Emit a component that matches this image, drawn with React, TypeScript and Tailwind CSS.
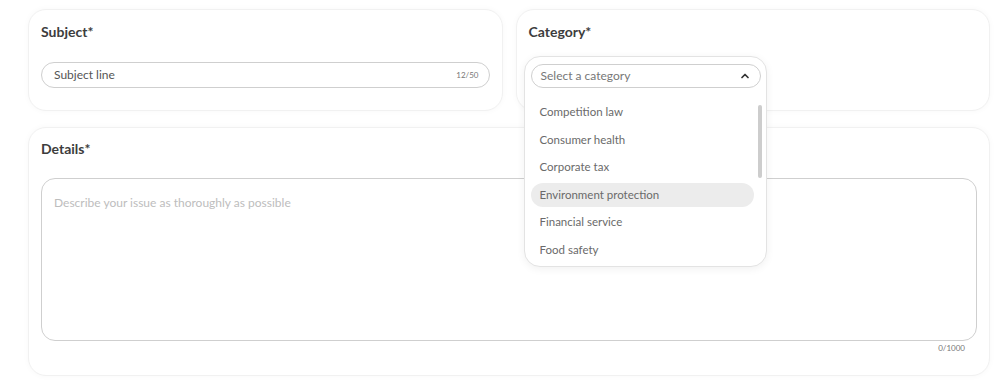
import { ChevronUp } from "lucide-react";

const CATEGORIES = [
  "Competition law",
  "Consumer health",
  "Corporate tax",
  "Environment protection",
  "Financial service",
  "Food safety",
];

function Card({ className, children }: { className?: string; children: React.ReactNode }) {
  return (
    <div
      className={`relative rounded-[18px] border border-[#f1f1f1] bg-white shadow-[0_0_6px_rgba(0,0,0,0.03)] px-[12px] ${className ?? ""}`}
    >
      {children}
    </div>
  );
}

function Label({ children }: { children: React.ReactNode }) {
  return <div className="text-[14px] font-bold leading-[18px] text-[#3d3d3d]">{children}</div>;
}

export default function App() {
  const active = "Environment protection";

  return (
    <div className="min-h-[392px] w-[1000px] bg-white font-['Lato',sans-serif]">
      <div className="ml-[28px] w-[962px] pt-[9px]">
        <div className="grid grid-cols-2 gap-[13px]">
          {/* Subject */}
          <Card className="h-[102px] pt-[13px]">
            <Label>Subject*</Label>
            <div className="mt-[21px] flex h-[26px] items-center justify-between rounded-full border border-[#cfcfcf] pl-[12px] pr-[10px]">
              <span className="text-[12px] text-[#555]">Subject line</span>
              <span className="text-[8px] text-[#777]">12/50</span>
            </div>
          </Card>

          {/* Category */}
          <Card className="z-10 h-[102px] pt-[13px]">
            <Label>Category*</Label>
            <div className="absolute left-[7px] top-[46px] h-[211px] w-[243px] overflow-hidden rounded-[16px] border border-[#e3e3e3] bg-white px-[6px] pt-[7px] shadow-[0_2px_8px_rgba(0,0,0,0.06)]">
              <div className="flex h-[24px] w-[230px] items-center justify-between rounded-full border border-[#cfcfcf] pl-[9px] pr-[9px]">
                <span className="text-[12px] text-[#777]">Select a category</span>
                <ChevronUp className="h-3 w-3 text-[#333]" strokeWidth={3.5} />
              </div>
              <div className="mt-[12px] flex flex-col gap-[3.5px] pr-[6px]">
                {CATEGORIES.map((c) => (
                  <div
                    key={c}
                    className={`flex h-[24px] shrink-0 items-center rounded-full px-[9px] text-[11.5px] text-[#6a6a6a] ${
                      c === active ? "bg-[#ececec]" : ""
                    }`}
                  >
                    {c}
                  </div>
                ))}
              </div>
              <div className="absolute right-[4px] top-[48px] h-[73px] w-[4px] rounded-full bg-[#cdcdcd]" />
            </div>
          </Card>
        </div>

        {/* Details */}
        <Card className="mt-[16px] h-[249px] pt-[12px]">
          <Label>Details*</Label>
          <div className="mt-[20px] h-[163px] rounded-[14px] border border-[#cfcfcf] px-[12px] pt-[10px]">
            <span className="text-[12px] text-[#bdbdbd]">Describe your issue as thoroughly as possible</span>
          </div>
          <div className="mt-[1px] pr-[12px] text-right text-[8px] text-[#777]">0/1000</div>
        </Card>
      </div>
    </div>
  );
}
